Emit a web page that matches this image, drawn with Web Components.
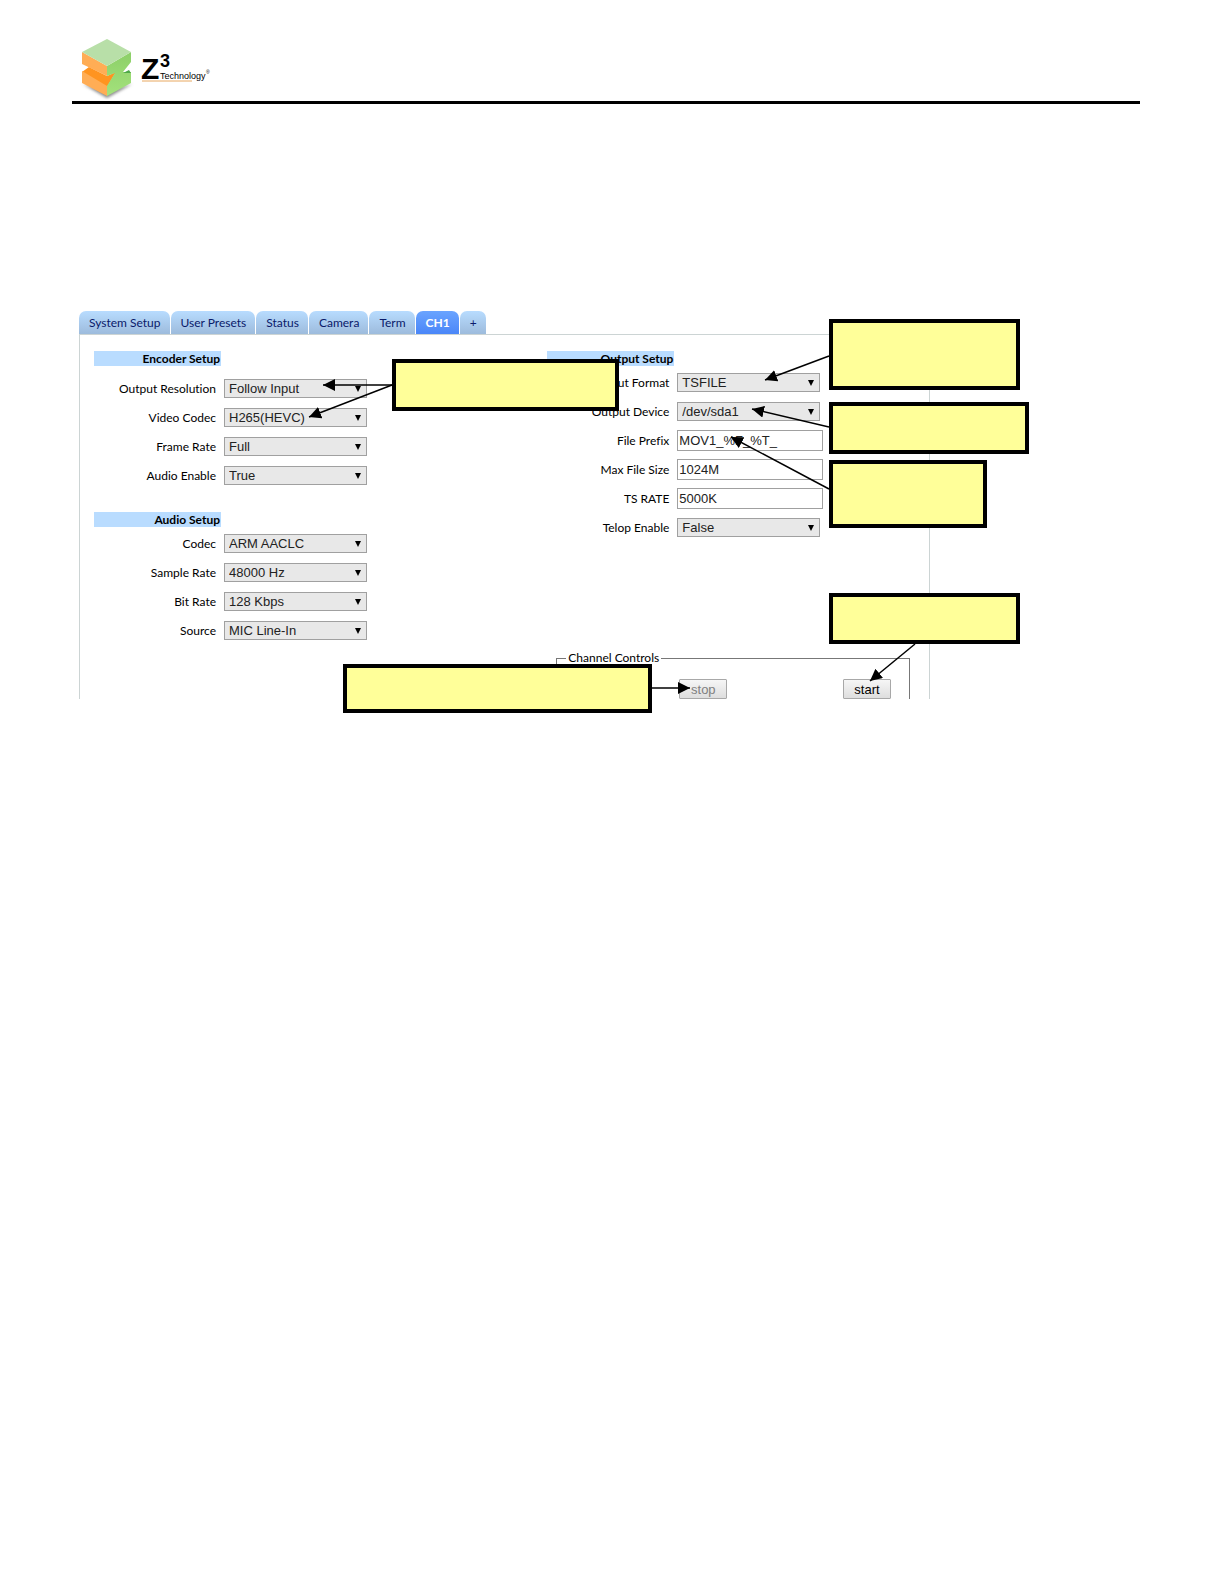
<!DOCTYPE html>
<html lang="en">
<head>
<meta charset="utf-8">
<title>Z3 Technology</title>
<style>
    body {
        margin: 0;
        background: #fff;
        color: #000;
        font-family: Lato, "Open Sans", sans-serif;
        font-size: 12px;
        font-variant-ligatures: none;
    }

    main {
        padding: 0 84px 24px 79px;
    }
</style>
</head>
<body>

<page-header></page-header>

<main>
    <setup-figure>
        <tab-bar slot="tabs" tabs="System Setup,User Presets,Status,Camera,Term,CH1,+" active="CH1"></tab-bar>

        <setup-section slot="left" heading="Encoder Setup" class="roomy">
            <setting-select label="Output Resolution" value="Follow Input"></setting-select>
            <setting-select label="Video Codec" value="H265(HEVC)"></setting-select>
            <setting-select label="Frame Rate" value="Full"></setting-select>
            <setting-select label="Audio Enable" value="True"></setting-select>
        </setup-section>
        <setup-section slot="left" heading="Audio Setup">
            <setting-select label="Codec" value="ARM AACLC"></setting-select>
            <setting-select label="Sample Rate" value="48000 Hz"></setting-select>
            <setting-select label="Bit Rate" value="128 Kbps"></setting-select>
            <setting-select label="Source" value="MIC Line-In"></setting-select>
        </setup-section>

        <setup-section slot="right" heading="Output Setup">
            <setting-select label="Output Format" value="TSFILE"></setting-select>
            <setting-select label="Output Device" value="/dev/sda1"></setting-select>
            <setting-text label="File Prefix" value="MOV1_%F_%T_"></setting-text>
            <setting-text label="Max File Size" value="1024M"></setting-text>
            <setting-text label="TS RATE" value="5000K"></setting-text>
            <setting-select label="Telop Enable" value="False"></setting-select>
        </setup-section>
        <channel-controls slot="right"></channel-controls>

        <callout-layer slot="notes"></callout-layer>
    </setup-figure>
</main>

<script>
function makeTemplate(html) {
    const template = document.createElement('template')
    template.innerHTML = html
    return template
}

class BaseElement extends HTMLElement {
    constructor() {
        super()
        this.attachShadow({ mode: 'open' })
        this.shadowRoot.appendChild(this.constructor.template.content.cloneNode(true))
    }
}

class PageHeader extends BaseElement {
    static template = makeTemplate(`
        <style>
            :host {
                display: block;
                padding: 34px 84px 0 72px;
            }
            header {
                border-bottom: 3px solid #000;
            }
            svg {
                display: block;
                height: 67px;
                width: 150px;
            }
            text {
                font-family: "Liberation Sans Narrow", "Liberation Sans", sans-serif;
            }
        </style>
        <header>
            <svg viewBox="72 34 150 67" role="img" aria-label="Z3 Technology">
                <defs>
                    <filter id="soft"><feGaussianBlur stdDeviation="1.5"/></filter>
                    <linearGradient id="side" x1="0" y1="0" x2="0" y2="1">
                        <stop offset="0" stop-color="#8ccf68"/>
                        <stop offset="1" stop-color="#a4e27c"/>
                    </linearGradient>
                </defs>
                <path d="M83 84 L107 98 L132 84 L107 90 Z" fill="#888" filter="url(#soft)"/>
                <path d="M82 72 L89 67 L107 76 L116 72 L107 87 Z" fill="#ff9420"/>
                <path d="M82 71 L107 86 V96 L82 83 Z" fill="#ffad55"/>
                <path d="M82 52 L107 66 V76 L82 64 Z" fill="#ffad55"/>
                <path d="M131 52 V62 L123 72 L131 72 V83 L107 96 V86 L115 73 L107 76 V66 Z" fill="url(#side)"/>
                <path d="M123 73 L129 70 L131 73 Z" fill="#4fa848"/>
                <path d="M107 39 L131 52 L107 66 L82 52 Z" fill="#b8dfa8"/>
                <text x="141" y="79" font-size="30" font-weight="bold">Z</text>
                <text x="160" y="67" font-size="18" font-weight="bold">3</text>
                <text x="160" y="79" font-size="9">Technology</text>
                <text x="206" y="74" font-size="5">®</text>
                <path d="M142 81 H192" stroke="#e8a860"/>
            </svg>
        </header>
    `)
}

class TabBar extends BaseElement {
    static template = makeTemplate(`
        <style>
            :host {
                display: block;
            }
            nav {
                display: flex;
                gap: 1px;
            }
            a {
                padding: 0 9px 0 10px;
                line-height: 23px;
                border-radius: 7px 7px 0 0;
                background: linear-gradient(#b8dcff, #9dbbdc);
                color: #0a1a6a;
                text-decoration: none;
            }
            a.active {
                background: linear-gradient(#6aa4ff, #4a86f8);
                color: #fff;
                font-weight: bold;
            }
        </style>
        <nav></nav>
    `)

    connectedCallback() {
        const nav = this.shadowRoot.querySelector('nav')
        this.getAttribute('tabs').split(',').forEach(name => {
            const link = document.createElement('a')
            link.href = '#'
            link.textContent = name
            if(name === this.getAttribute('active')) {
                link.className = 'active'
            }
            nav.appendChild(link)
        })
    }
}

class SetupSection extends BaseElement {
    static template = makeTemplate(`
        <style>
            :host {
                display: flex;
                flex-direction: column;
                gap: 8px;
            }
            h2 {
                box-sizing: border-box;
                width: 127px;
                margin: 0 0 -2px;
                padding-right: 1px;
                background: #b9dcff;
                font-size: 12px;
                line-height: 15px;
                text-align: right;
            }
            :host(.roomy) {
                margin-bottom: 26px;
            }
            :host(.roomy) h2 {
                margin-bottom: 4px;
            }
        </style>
        <h2></h2>
        <slot></slot>
    `)

    connectedCallback() {
        this.shadowRoot.querySelector('h2').textContent = this.getAttribute('heading')
    }
}

// label on the left, control on the right, shared by selects and text boxes
const rowStyle = `
    :host {
        display: grid;
        grid-template-columns: 122px auto;
        justify-content: start;
        align-items: center;
        column-gap: 8px;
        height: 21px;
    }
    label {
        text-align: right;
        white-space: nowrap;
    }
    select, input {
        box-sizing: border-box;
        margin: 0;
        border: 1px solid #a0a0a0;
        border-radius: 0;
        color: #222;
        font: 13px "Liberation Sans", Arial, sans-serif;
    }
`

class SettingSelect extends BaseElement {
    static template = makeTemplate(`
        <style>
            ${rowStyle}
            .box {
                display: grid;
                align-items: center;
            }
            select, svg {
                grid-area: 1 / 1;
            }
            select {
                appearance: none;
                width: 143px;
                height: 19px;
                padding: 0 4px;
                background: #e8e8e8;
            }
            svg {
                justify-self: end;
                width: 6px;
                height: 6px;
                margin-right: 6px;
                pointer-events: none;
            }
        </style>
        <label for="field"></label>
        <div class="box">
            <select id="field"><option></option></select>
            <svg viewBox="0 0 6 6"><path d="M0 0H6L3 6Z"/></svg>
        </div>
    `)

    connectedCallback() {
        this.shadowRoot.querySelector('label').textContent = this.getAttribute('label')
        this.shadowRoot.querySelector('option').textContent = this.getAttribute('value')
    }
}

class SettingText extends BaseElement {
    static template = makeTemplate(`
        <style>
            ${rowStyle}
            input {
                width: 146px;
                height: 21px;
                padding: 0 1px;
                background: #fff;
            }
        </style>
        <label for="field"></label>
        <input id="field" type="text">
    `)

    connectedCallback() {
        this.shadowRoot.querySelector('label').textContent = this.getAttribute('label')
        this.shadowRoot.querySelector('input').value = this.getAttribute('value')
    }
}

class ChannelControls extends BaseElement {
    static template = makeTemplate(`
        <style>
            :host {
                display: block;
                margin: 112px 0 0 9px;
            }
            fieldset {
                margin: 0;
                padding: 13px 18px 0 122px;
                border: 1px solid #777;
                border-bottom: 0;
            }
            legend {
                margin-left: -113px;
                padding: 0 2px;
                line-height: 16px;
            }
            div {
                display: flex;
                justify-content: space-between;
            }
            button {
                width: 48px;
                height: 20px;
                padding: 0;
                border: 1px solid #a8a8a8;
                border-radius: 1px;
                background: linear-gradient(#f6f6f6, #dedede);
                color: #000;
                font: 13px "Liberation Sans", Arial, sans-serif;
            }
            button:disabled {
                color: #808080;
            }
        </style>
        <fieldset>
            <legend>Channel Controls</legend>
            <div>
                <button type="button" disabled>stop</button>
                <button type="button">start</button>
            </div>
        </fieldset>
    `)
}

// yellow notes and their arrows, lying over the form
class CalloutLayer extends BaseElement {
    static template = makeTemplate(`
        <style>
            :host {
                position: absolute;
                inset: 0;
                pointer-events: none;
            }
            svg {
                display: block;
                width: 100%;
                height: 100%;
                overflow: visible;
            }
            rect {
                fill: #ff9;
                stroke: #000;
                stroke-width: 4px;
            }
            line {
                stroke: #000;
                stroke-width: 1.5px;
                marker-end: url(#head);
            }
        </style>
        <svg aria-hidden="true">
            <defs>
                <marker id="head" viewBox="0 0 12 12" markerWidth="12" markerHeight="12"
                    markerUnits="userSpaceOnUse" refX="12" refY="6" orient="auto">
                    <path d="M0 0L12 6L0 12Z"/>
                </marker>
            </defs>
            <line x1="313" y1="74" x2="244" y2="74"/>
            <line x1="313" y1="74" x2="230" y2="106"/>
            <line x1="750" y1="45" x2="686" y2="69"/>
            <line x1="750" y1="116" x2="673" y2="98"/>
            <line x1="750" y1="178" x2="652" y2="126"/>
            <line x1="836" y1="333" x2="791" y2="370"/>
            <line x1="573" y1="377" x2="611" y2="377"/>
            <rect x="315" y="50" width="223" height="48"/>
            <rect x="752" y="10" width="187" height="67"/>
            <rect x="752" y="93" width="196" height="48"/>
            <rect x="752" y="151" width="154" height="64"/>
            <rect x="752" y="284" width="187" height="47"/>
            <rect x="266" y="355" width="305" height="45"/>
        </svg>
    `)
}

class SetupFigure extends BaseElement {
    static template = makeTemplate(`
        <style>
            :host {
                display: block;
                position: relative;
                max-width: 851px;
                margin-top: 207px;
                padding-bottom: 16px;
            }
            .panel {
                display: grid;
                grid-template-columns: 5fr 4fr;
                padding: 16px 19px 0 14px;
                border: 1px solid #ccd4d4;
                border-bottom: 0;
            }
        </style>
        <slot name="tabs"></slot>
        <div class="panel">
            <div><slot name="left"></slot></div>
            <div><slot name="right"></slot></div>
        </div>
        <slot name="notes"></slot>
    `)
}

window.customElements.define('page-header', PageHeader)
window.customElements.define('tab-bar', TabBar)
window.customElements.define('setup-section', SetupSection)
window.customElements.define('setting-select', SettingSelect)
window.customElements.define('setting-text', SettingText)
window.customElements.define('channel-controls', ChannelControls)
window.customElements.define('callout-layer', CalloutLayer)
window.customElements.define('setup-figure', SetupFigure)
</script>
</body>
</html>
